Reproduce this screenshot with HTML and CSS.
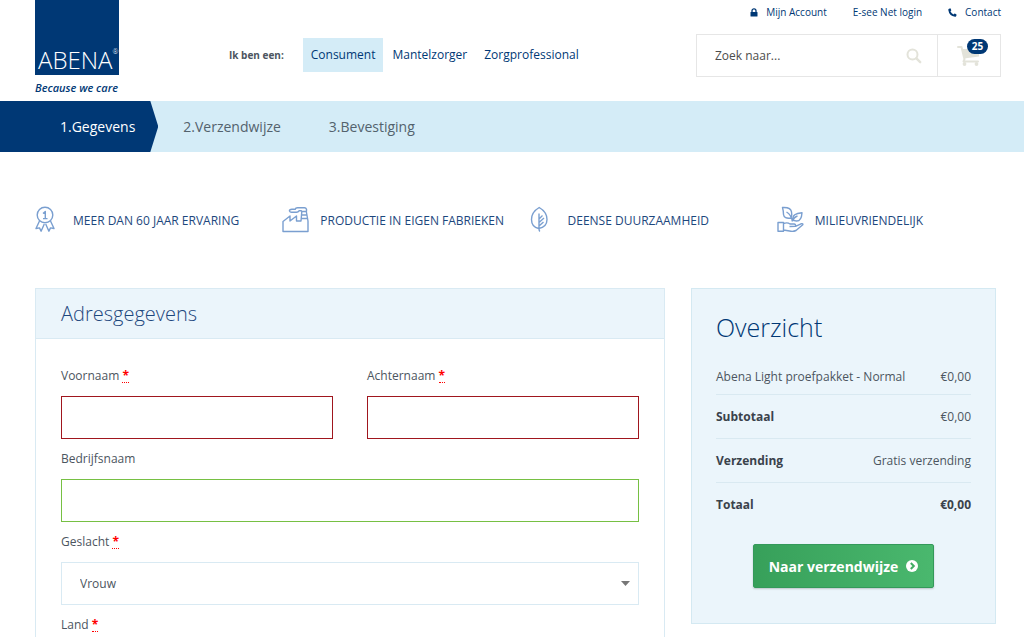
FILE: index.html
```html
<!DOCTYPE html>
<html lang="nl">
<head>
<meta charset="utf-8">
<meta name="viewport" content="width=device-width, initial-scale=1">
<title>Gegevens - Abena</title>
<link rel="stylesheet" href="styles.css">
</head>
<body>
<header class="header">
  <a class="logo" href="#">
    <span class="logo-box">ABENA<span class="logo-mark">®</span></span>
    <span class="logo-tagline">Because we care</span>
  </a>
  <nav class="audience">
    <span class="audience-label">Ik ben een:</span>
    <a class="audience-link is-active" href="#">Consument</a>
    <a class="audience-link" href="#">Mantelzorger</a>
    <a class="audience-link" href="#">Zorgprofessional</a>
  </nav>
  <div class="tools">
    <nav class="top-links">
      <a class="top-link" href="#"><svg width="8" height="9" viewBox="0 0 8 9"><path d="M2 4.500V2.800a2 2 0 0 1 4 0v1.700" fill="none" stroke="currentColor" stroke-width="1.300"/><rect x="0.500" y="4" width="7" height="4.500" rx="0.600" fill="currentColor"/></svg>Mijn Account</a>
      <a class="top-link" href="#">E-see Net login</a>
      <a class="top-link" href="#"><svg width="9" height="9" viewBox="0 0 9 9"><path d="M.6.9 2.200.3q.4 0 .5.400l.6 1.500q0 .3-.3.500l-.6.500Q3.500 5.500 5.700 6.400l.6-.7q.3-.2.600-.1l1.500.8q.3.200.2.500l-.5 1.300q-.3.500-1.100.5Q1.200 8.200.3 2.100.3 1.200.6.900z" fill="currentColor"/></svg>Contact</a>
    </nav>
    <div class="search-row">
      <form class="search">
        <input class="search-input" type="search" placeholder="Zoek naar..." aria-label="Zoek naar">
        <button class="search-button" type="button" aria-label="Zoeken"><svg width="16" height="16" viewBox="0 0 16 16" fill="none" stroke="currentColor"><circle cx="6.500" cy="6.500" r="5" stroke-width="2"/><path d="m10.400 10.400 3.800 3.800" stroke-width="2.400" stroke-linecap="round"/></svg></button>
      </form>
      <a class="cart" href="#" aria-label="Winkelwagen">
        <svg width="24" height="21" viewBox="0 0 24 21"><path d="M1 2h3.500l3 12.200L6.500 16.500H21" fill="none" stroke="currentColor" stroke-width="2" stroke-linejoin="round" stroke-linecap="round"/><path d="M5 4H22v7.500L7.200 13.500z" fill="currentColor"/><circle cx="7.500" cy="19" r="1.900" fill="currentColor"/><circle cx="19.500" cy="19" r="1.900" fill="currentColor"/></svg>
        <span class="cart-count">25</span>
      </a>
    </div>
  </div>
</header>

<ol class="steps">
  <li class="step is-current">1.Gegevens</li>
  <li class="step">2.Verzendwijze</li>
  <li class="step">3.Bevestiging</li>
</ol>

<ul class="features">
  <li class="feature"><svg class="feature-icon" width="28" height="28" viewBox="0 0 28 28"><circle cx="10" cy="9" r="7.800"/><path d="M8 7.500 10.300 5.500V12.500M8 12.600h4.500M4.500 15 1 22.500l3.500-.6 1.600 3.300L9.300 18M15.500 15l3.500 7.500-3.500-.6-1.600 3.300L10.700 18"/></svg>Meer dan 60 jaar ervaring</li>
  <li class="feature"><svg class="feature-icon" width="28" height="28" viewBox="0 0 28 28"><path d="M1 25.500V15.500l7-5.500v5l6.500-5v5H19l.8-9.500h4.500L26 15v10.500zM19.500 9h5M19 12.500h6M24.500 5.500V3.200Q24 1.800 22.500 1.800h-7q-2 0-2.300 1.500H10Q7 3.500 7.500 5T10 6.300h4.500Q16.300 6.200 17 4.700h2.800"/></svg>Productie in eigen fabrieken</li>
  <li class="feature"><svg class="feature-icon" width="28" height="28" viewBox="0 0 28 28"><path d="M9.200 1.500Q1.500 6 1.500 13.500t7.200 9q8.300-1.500 8.300-9T9.200 1.500zM9 7.500v15q0 2 .8 3M9 13l3.500-3.500M9 16.500l5-4.500M9 20l4.500-4"/></svg>Deense duurzaamheid</li>
  <li class="feature"><svg class="feature-icon" width="28" height="28" viewBox="0 0 28 28"><path d="M1 16.500h5.500v8.800H1zM6.500 17.500q4-1.500 6.500.5h4q2 .2 1.500 2.300l-6 .2M18.500 20.300l5.500-2.500q2.500-.5 1.800 1L19 24.500q-3 1.500-6.500.5l-6-1M15.300 15.500Q14.500 9 9.500 6M14 12Q7 13 6.500 8.500 6.500 5 5.500 1.500q8.500-.5 9 4.500.8 3-.5 6zM15.500 15.200Q17 11 20.500 10M16 13.500q-1-6 9-6.800-.5 8.500-5.500 8.300-2.500 0-3.500-1.500z"/></svg>Milieuvriendelijk</li>
</ul>

<main class="checkout">
  <form class="address">
    <h2 class="address-title">Adresgegevens</h2>
    <div class="fields">
      <div class="field">
        <label class="label" for="voornaam">Voornaam <abbr class="required">*</abbr></label>
        <input class="control is-invalid" id="voornaam" type="text">
      </div>
      <div class="field">
        <label class="label" for="achternaam">Achternaam <abbr class="required">*</abbr></label>
        <input class="control is-invalid" id="achternaam" type="text">
      </div>
      <div class="field is-wide">
        <label class="label" for="bedrijfsnaam">Bedrijfsnaam</label>
        <input class="control is-valid" id="bedrijfsnaam" type="text">
      </div>
      <div class="field is-wide">
        <label class="label" for="geslacht">Geslacht <abbr class="required">*</abbr></label>
        <select class="control select" id="geslacht"><option>Vrouw</option></select>
      </div>
      <div class="field is-wide">
        <label class="label" for="land">Land <abbr class="required">*</abbr></label>
        <select class="control select" id="land"></select>
      </div>
    </div>
  </form>

  <aside class="summary">
    <h2 class="summary-title">Overzicht</h2>
    <table class="totals">
      <tbody>
        <tr class="item"><td>Abena Light proefpakket - Normal</td><td>€0,00</td></tr>
        <tr><th scope="row">Subtotaal</th><td>€0,00</td></tr>
        <tr><th scope="row">Verzending</th><td>Gratis verzending</td></tr>
        <tr class="total"><th scope="row">Totaal</th><td>€0,00</td></tr>
      </tbody>
    </table>
    <button class="next" type="button">Naar verzendwijze <svg width="12" height="12" viewBox="0 0 12 12"><circle cx="6" cy="6" r="6" fill="#fff"/><path d="m4.800 3 3 3-3 3" fill="none" stroke="#41ad62" stroke-width="2"/></svg></button>
  </aside>
</main>
</body>
</html>
```
FILE: styles.css
```css
* {
  box-sizing: border-box;
}

body {
  margin: 0;
  background: #fff;
  color: #4c5560;
  font-family: "Open Sans", sans-serif;
  font-size: 12px;
}

a {
  color: #003875;
  text-decoration: none;
}

/* Header */
.header {
  display: flex;
  align-items: flex-start;
  height: 101px;
  padding: 0 23px 0 35px;
}

.logo {
  flex: none;
  width: 84px;
}

.logo-box {
  display: flex;
  align-items: flex-end;
  height: 75px;
  padding-left: 3px;
  background: #003875;
  color: #fff;
  font-size: 24px;
  font-weight: 300;
  line-height: 30px;
}

.logo-mark {
  font-size: 7px;
  line-height: 46px;
}

.logo-tagline {
  display: block;
  font-size: 11px;
  font-style: italic;
  font-weight: 600;
  line-height: 25px;
  white-space: nowrap;
}

.audience {
  display: flex;
  align-items: center;
  gap: 1px;
  margin: 38px 0 0 110px;
  line-height: 34px;
  white-space: nowrap;
}

.audience-label {
  margin-right: 18px;
  font-size: 10px;
  font-weight: 700;
}

.audience-link {
  padding: 0 8px;
  font-size: 12px;
}

.audience-link.is-active {
  background: #d4ecf7;
}

.tools {
  width: 305px;
  margin-left: auto;
}

.top-links {
  display: flex;
  justify-content: flex-end;
  gap: 26px;
  height: 34px;
  font-size: 10px;
  line-height: 25px;
}

.top-link svg {
  margin-right: 8px;
  vertical-align: -1px;
}

.search-row {
  display: flex;
  height: 43px;
  border: 1px solid #e6e6e6;
}

.search {
  display: flex;
  flex: 1;
  border-right: 1px solid #e6e6e6;
}

.search-input {
  flex: 1;
  min-width: 0;
  padding: 0 0 0 18px;
  border: 0;
  background: none;
  color: #4c4c4c;
  font: 12px "Open Sans", sans-serif;
}

.search-input::placeholder {
  color: #4c4c4c;
}

.search-button {
  display: flex;
  align-items: center;
  padding: 0 15px;
  border: 0;
  background: none;
  color: #e3e3da;
}

.cart {
  position: relative;
  display: flex;
  align-items: center;
  justify-content: center;
  width: 62px;
  color: #e3e3da;
}

.cart-count {
  position: absolute;
  top: 4px;
  right: 12px;
  width: 21px;
  border-radius: 8px;
  background: #003875;
  color: #fff;
  font-size: 10px;
  font-weight: 700;
  line-height: 15px;
  text-align: center;
}

/* Checkout steps */
.steps {
  display: flex;
  margin: 0;
  padding: 0;
  background: #d4ecf7;
  color: #53626d;
  font-size: 14px;
  line-height: 51px;
  list-style: none;
}

.step {
  padding: 0 23px 0 25px;
}

.step.is-current {
  padding-left: 60px;
  background: #003875;
  clip-path: polygon(0 0, calc(100% - 8px) 0, 100% 50%, calc(100% - 8px) 100%, 0 100%);
  color: #fff;
}

/* Features */
.features {
  display: grid;
  grid-template-columns: repeat(4, 1fr);
  margin: 54px 0;
  padding: 0 0 0 35px;
  color: #1d477d;
  font-size: 12px;
  list-style: none;
  text-transform: uppercase;
}

.feature {
  display: flex;
  align-items: center;
  gap: 10px;
  white-space: nowrap;
}

.feature-icon {
  flex: none;
  fill: none;
  stroke: #7a9fd0;
  stroke-linejoin: round;
  stroke-width: 1.4;
}

/* Checkout columns */
.checkout {
  display: grid;
  grid-template-columns: 630fr 305fr;
  gap: 26px;
  align-items: start;
  padding: 0 28px 0 35px;
}

.address {
  border: 1px solid #d9eaf3;
}

.address-title {
  margin: 0;
  padding: 0 25px;
  border-bottom: 1px solid #d9eaf3;
  background: #ebf5fb;
  color: #1d477d;
  font-size: 20px;
  font-weight: 300;
  line-height: 49px;
}

.fields {
  display: grid;
  grid-template-columns: 1fr 1fr;
  column-gap: 34px;
  padding: 17px 25px 25px;
}

.is-wide {
  grid-column: 1 / -1;
}

.label {
  display: block;
  line-height: 40px;
}

.required {
  display: inline-block;
  border-bottom: 1px dotted #f00;
  color: #f00;
  font-weight: 700;
  line-height: 12px;
  text-decoration: none;
}

.control {
  display: block;
  width: 100%;
  height: 43px;
  padding: 0 18px;
  border: 1px solid #d9eaf3;
  border-radius: 0;
  background: #fff;
  color: #4c5560;
  font: 12px "Open Sans", sans-serif;
}

.control.is-invalid {
  border-color: #a0161e;
}

.control.is-valid {
  border-color: #76c043;
}

.select {
  appearance: none;
  background: #fff url("data:image/svg+xml,%3Csvg xmlns='http://www.w3.org/2000/svg' width='9' height='5'%3E%3Cpath d='M0 0h9L4.500 5z' fill='%23777'/%3E%3C/svg%3E") no-repeat right 8px center;
}

/* Order summary */
.summary {
  padding: 18px 24px 35px;
  border: 1px solid #d4e9f2;
  background: #ebf5fb;
}

.summary-title {
  margin: 0 0 13px;
  color: #003875;
  font-size: 25px;
  font-weight: 300;
  line-height: 40px;
}

.totals,
.totals tbody {
  display: block;
}

.totals tr {
  display: flex;
  justify-content: space-between;
  border-bottom: 1px solid #d9e9f1;
  line-height: 43px;
}

.totals .item {
  line-height: 34px;
}

.totals .total {
  border-bottom: 0;
}

.totals th,
.totals td {
  padding: 0;
}

.totals th,
.totals .total td {
  color: #3a424b;
  font-weight: 700;
}

.next {
  display: flex;
  align-items: center;
  gap: 8px;
  height: 44px;
  margin: 18px auto 0;
  padding: 0 15px;
  border: 1px solid #34995a;
  border-radius: 2px;
  background: linear-gradient(90deg, #37a05a, #4ab86e);
  box-shadow: 0 1px 2px #0003;
  color: #fff;
  font: 700 14px "Open Sans", sans-serif;
}
```
